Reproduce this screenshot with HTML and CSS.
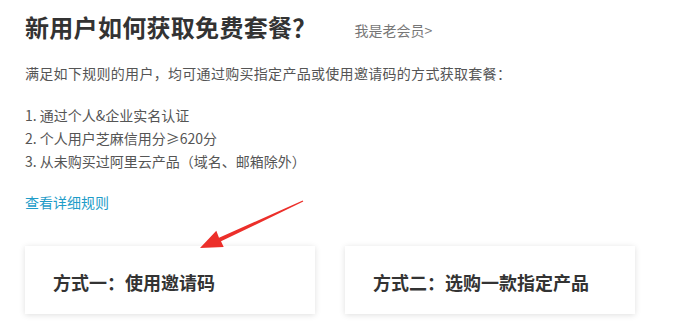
FILE: index.html
```html
<!DOCTYPE html>
<html lang="zh-CN">
<head>
<meta charset="utf-8">
<link rel="stylesheet" href="styles.css">
</head>
<body>
<div class="page">
  <div class="head">
    <h1 class="title">新用户如何获取免费套餐？</h1>
    <a class="old">我是老会员&gt;</a>
  </div>
  <p class="intro">满足如下规则的用户，均可通过购买指定产品或使用邀请码的方式获取套餐：</p>
  <ol class="rules">
    <li>1. 通过个人&amp;企业实名认证</li>
    <li>2. 个人用户芝麻信用分≥620分</li>
    <li>3. 从未购买过阿里云产品（域名、邮箱除外）</li>
  </ol>
  <a class="more">查看详细规则</a>
  <div class="cards">
    <div class="card">方式一：使用邀请码</div>
    <div class="card">方式二：选购一款指定产品</div>
  </div>
  <svg class="arrow" width="677" height="328" viewBox="0 0 677 328">
    <polygon fill="#ec2f2a" points="303.3,201.6 302.7,200.4 219,237.8 216.3,230.7 200,248 223.7,247.1 221,241.3"/>
  </svg>
</div>
</body>
</html>
```
FILE: styles.css
```css
* { box-sizing: border-box; }
html, body { margin: 0; padding: 0; background: #fff; }
body {
  font-family: "Noto Sans CJK SC", "Noto Sans", sans-serif;
  color: #555;
  width: 677px;
  height: 328px;
  overflow: hidden;
}
.page {
  position: relative;
  padding: 11px 0 0 25px;
}
.head {
  display: flex;
  align-items: center;
}
.title {
  margin: 0;
  font-size: 24px;
  line-height: 32px;
  font-weight: 700;
  color: #333;
  letter-spacing: 0.3px;
}
.old {
  margin-left: 38px;
  margin-top: 6px;
  font-size: 14px;
  line-height: 20px;
  color: #777;
}
.intro {
  margin: 19px 0 0;
  font-size: 14px;
  line-height: 22px;
  letter-spacing: 0.3px;
}
.rules {
  list-style: none;
  margin: 20px 0 0;
  padding: 0;
  font-size: 14px;
  line-height: 23px;
}
.more {
  display: block;
  margin-top: 18px;
  font-size: 14px;
  line-height: 22px;
  color: #1e9cc8;
}
.cards {
  display: flex;
  gap: 30px;
  margin-top: 33px;
}
.card {
  width: 290px;
  height: 68px;
  padding: 24px 28px 0;
  background: #fff;
  box-shadow: 0 1px 6px rgba(0, 0, 0, 0.13);
  font-size: 18px;
  line-height: 24px;
  font-weight: 700;
  color: #333;
}
.arrow {
  position: absolute;
  left: 0;
  top: 0;
  pointer-events: none;
}
```
